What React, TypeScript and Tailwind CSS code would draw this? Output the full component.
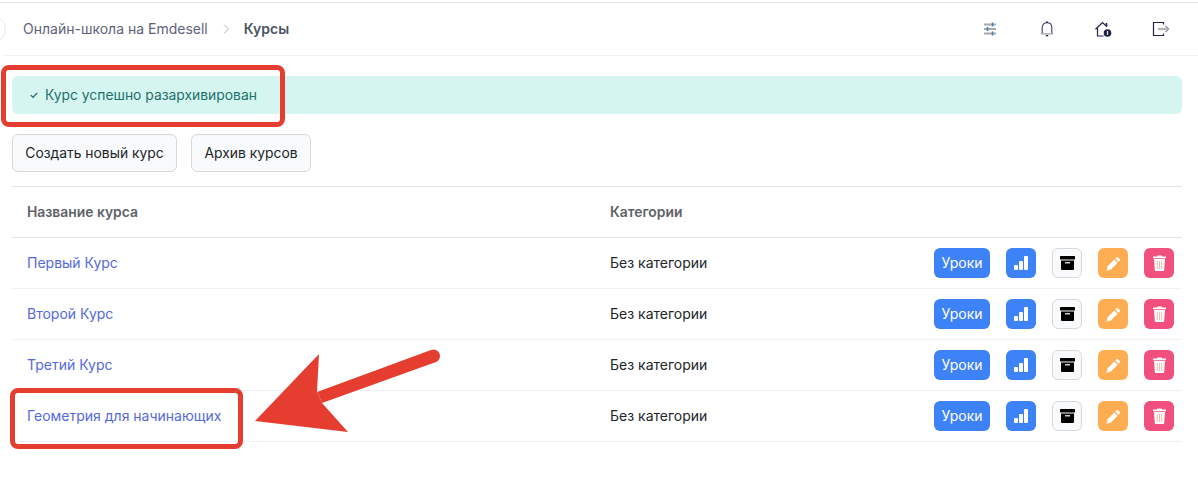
const courses = ["Первый Курс", "Второй Курс", "Третий Курс", "Геометрия для начинающих"];

function SlidersIcon() {
  return (
    <svg width="16" height="16" viewBox="0 0 16 16" fill="none">
      <path d="M2 3.500h12M2 8h12M2 12.500h12" stroke="#a8a8ae" strokeWidth="1.800" />
      <path d="M10.500 1.500v4M5.500 6v4M10.500 10.500v4" stroke="#3b82c4" strokeWidth="1.600" />
    </svg>
  );
}

function BellIcon() {
  return (
    <svg width="16" height="18" viewBox="0 0 16 18" fill="none">
      <path d="M3.200 13.500V7.500C3.200 4.600 5 2.800 8 2.800s4.800 1.800 4.800 4.700v6" stroke="#3a3f5c" strokeWidth="1.100" />
      <path d="M1.800 13.800h12.400" stroke="#a8a8ae" strokeWidth="1.400" />
      <path d="M6.800 15h2.400v1.300H6.800zM7 1.600h2v1.200H7z" fill="#1e2140" />
    </svg>
  );
}

function HomeIcon() {
  return (
    <svg width="20" height="18" viewBox="0 0 20 18" fill="none">
      <path d="M1.500 9.200 8.500 2.500l4.500 4.300M3.500 8v8h6" stroke="#22254a" strokeWidth="1.200" />
      <path d="M12.500 3v3" stroke="#22254a" strokeWidth="1.600" />
      <circle cx="13.500" cy="13" r="3.800" fill="#1e2140" />
      <path d="M13.500 11v4" stroke="#d5d8e8" strokeWidth="1.300" />
    </svg>
  );
}

function LogoutIcon() {
  return (
    <svg width="18" height="16" viewBox="0 0 18 16" fill="none">
      <path d="M11.500 3.500V1.500H1.500v13h10v-2" stroke="#22254a" strokeWidth="1.200" />
      <path d="M6 8h8.500" stroke="#b4b4b8" strokeWidth="2.200" />
      <path d="m13.500 5 3 3-3 3" stroke="#8a8a94" strokeWidth="1.200" />
    </svg>
  );
}

function StatsIcon() {
  return (
    <svg width="14" height="14" viewBox="0 0 14 14" fill="white">
      <rect x="0" y="9" width="4" height="5" rx="1" />
      <rect x="5" y="5" width="4" height="9" rx="1" />
      <rect x="10" y="0" width="4" height="14" rx="1" />
    </svg>
  );
}

function ArchiveIcon() {
  return (
    <svg width="15" height="14" viewBox="0 0 15 14">
      <rect x="0" y="0" width="15" height="3.600" rx="0.500" fill="#000" />
      <path d="M1 4.600h13v8.400a1 1 0 0 1-1 1H2a1 1 0 0 1-1-1z" fill="#000" />
      <rect x="5" y="6.200" width="5" height="1.200" fill="#fff" />
    </svg>
  );
}

function PencilIcon() {
  return (
    <svg width="15" height="15" viewBox="0 0 15 15" fill="white">
      <path d="M10.500 1.200a1 1 0 0 1 1.400 0l1.900 1.900a1 1 0 0 1 0 1.400l-1.300 1.300-3.300-3.300zM8.300 3.400l3.300 3.300-7 7-4 1 .8-4.200z" />
    </svg>
  );
}

function TrashIcon() {
  return (
    <svg width="13" height="16" viewBox="0 0 13 16">
      <path d="M4.500 .5h4l.6 1H13v1.800H0V1.500H3.900z" fill="#fff" />
      <path d="M1 4h11l-.8 11a1 1 0 0 1-1 1H2.800a1 1 0 0 1-1-1z" fill="#fff" />
      <path d="M4.300 6v8M6.500 6v8M8.700 6v8" stroke="#f9b8a8" strokeWidth="1" />
    </svg>
  );
}

function CourseRow({ name }: { name: string }) {
  return (
    <div className="grid grid-cols-[583px_1fr_auto] items-center h-[51px] border-b border-[#eff2f5] pl-[15px] pr-2 text-sm">
      <a className="text-[#5468e0]">{name}</a>
      <span className="text-[#212529]">Без категории</span>
      <div className="flex items-center gap-4">
        <button className="h-[30px] w-14 rounded-md bg-[#3e82f7] text-white text-sm">Уроки</button>
        <button className="h-[30px] w-[30px] rounded-md bg-[#3e82f7] flex items-center justify-center">
          <StatsIcon />
        </button>
        <button className="h-[30px] w-[30px] rounded-md bg-[#f8fafc] border border-[#d8d8dc] flex items-center justify-center">
          <ArchiveIcon />
        </button>
        <button className="h-[30px] w-[30px] rounded-md bg-[#ffad52] flex items-center justify-center">
          <PencilIcon />
        </button>
        <button className="h-[30px] w-[30px] rounded-md bg-[#f1507e] flex items-center justify-center">
          <TrashIcon />
        </button>
      </div>
    </div>
  );
}

export default function App() {
  return (
    <div className="relative h-[499px] w-[1198px] overflow-hidden bg-white font-['Inter',sans-serif]">
      <div className="mt-[2px] h-px bg-[#e4e4e7]" />

      {/* Top bar */}
      <div className="ml-1 h-[53px] border-b border-[#eff2f5] flex items-center justify-between pr-[9px]">
        <div className="flex items-center text-sm">
          <div className="-ml-[26px] mr-[17px] w-[28px] h-[28px] rounded-full border border-[#e8e8f0] bg-white" />
          <span className="text-[#5e6278]">Онлайн-школа на Emdesell</span>
          <svg className="mx-[11px]" width="14" height="14" viewBox="0 0 14 14" fill="none">
            <path d="m5 2.500 4.500 4.500L5 11.500" stroke="#b5b5c3" strokeWidth="1" />
          </svg>
          <span className="font-semibold text-[#4b5563]">Курсы</span>
        </div>
        <div className="flex items-center">
          <div className="w-[57px] flex justify-center"><SlidersIcon /></div>
          <div className="w-[57px] flex justify-center"><BellIcon /></div>
          <div className="w-[57px] flex justify-center"><HomeIcon /></div>
          <div className="w-[57px] flex justify-center"><LogoutIcon /></div>
        </div>
      </div>

      <div className="px-3 pt-5 w-[1194px]">
        <div className="w-[1170px]">
          {/* Alert */}
          <div className="h-[38px] rounded-md bg-[#d5f6f0] flex items-center pl-[18px] text-[13.86px] text-[#1f6f6b] gap-[7px]">
            <svg width="8" height="8" viewBox="0 0 8 8" fill="none">
              <path d="m.8 4.200 2.200 2.200L7.200 1.800" stroke="#1f5f63" strokeWidth="1.200" />
            </svg>
            Курс успешно разархивирован
          </div>

          <div className="mt-5 flex gap-[14px]">
            <button className="h-[38px] w-[165px] rounded-md bg-[#f8fafc] border border-[#d8d8dc] text-[13.86px] text-[#212529]">
              Создать новый курс
            </button>
            <button className="h-[38px] w-[120px] rounded-md bg-[#f8fafc] border border-[#d8d8dc] text-[13.86px] text-[#212529]">
              Архив курсов
            </button>
          </div>

          {/* Table */}
          <div className="mt-[14px] border-t border-[#e4e4e7]">
            <div className="grid grid-cols-[583px_1fr] items-center h-[51px] border-b border-[#e4e4e7] pl-[15px] text-[13.86px] font-semibold text-[#5f6368]">
              <span>Название курса</span>
              <span>Категории</span>
            </div>
            {courses.map((c) => (
              <CourseRow key={c} name={c} />
            ))}
          </div>
        </div>
      </div>

      {/* Red annotations */}
      <div className="absolute left-[1px] top-[65px] w-[284px] h-[62px] rounded-lg border-[5px] border-[#e53e31]" />
      <div className="absolute left-[10px] top-[388px] w-[233px] h-[61px] rounded-lg border-[5px] border-[#e53e31]" />
      <svg className="absolute left-0 top-0" width="1198" height="499" viewBox="0 0 1198 499" fill="none">
        <path d="M255 421 319 354 317 392 322 403 348 432Z" fill="#e53e31" />
        <path d="M317 392 431 350 a6.500 6.500 0 0 1 5 12 L322 403Z" fill="#e53e31" />
      </svg>
    </div>
  );
}
